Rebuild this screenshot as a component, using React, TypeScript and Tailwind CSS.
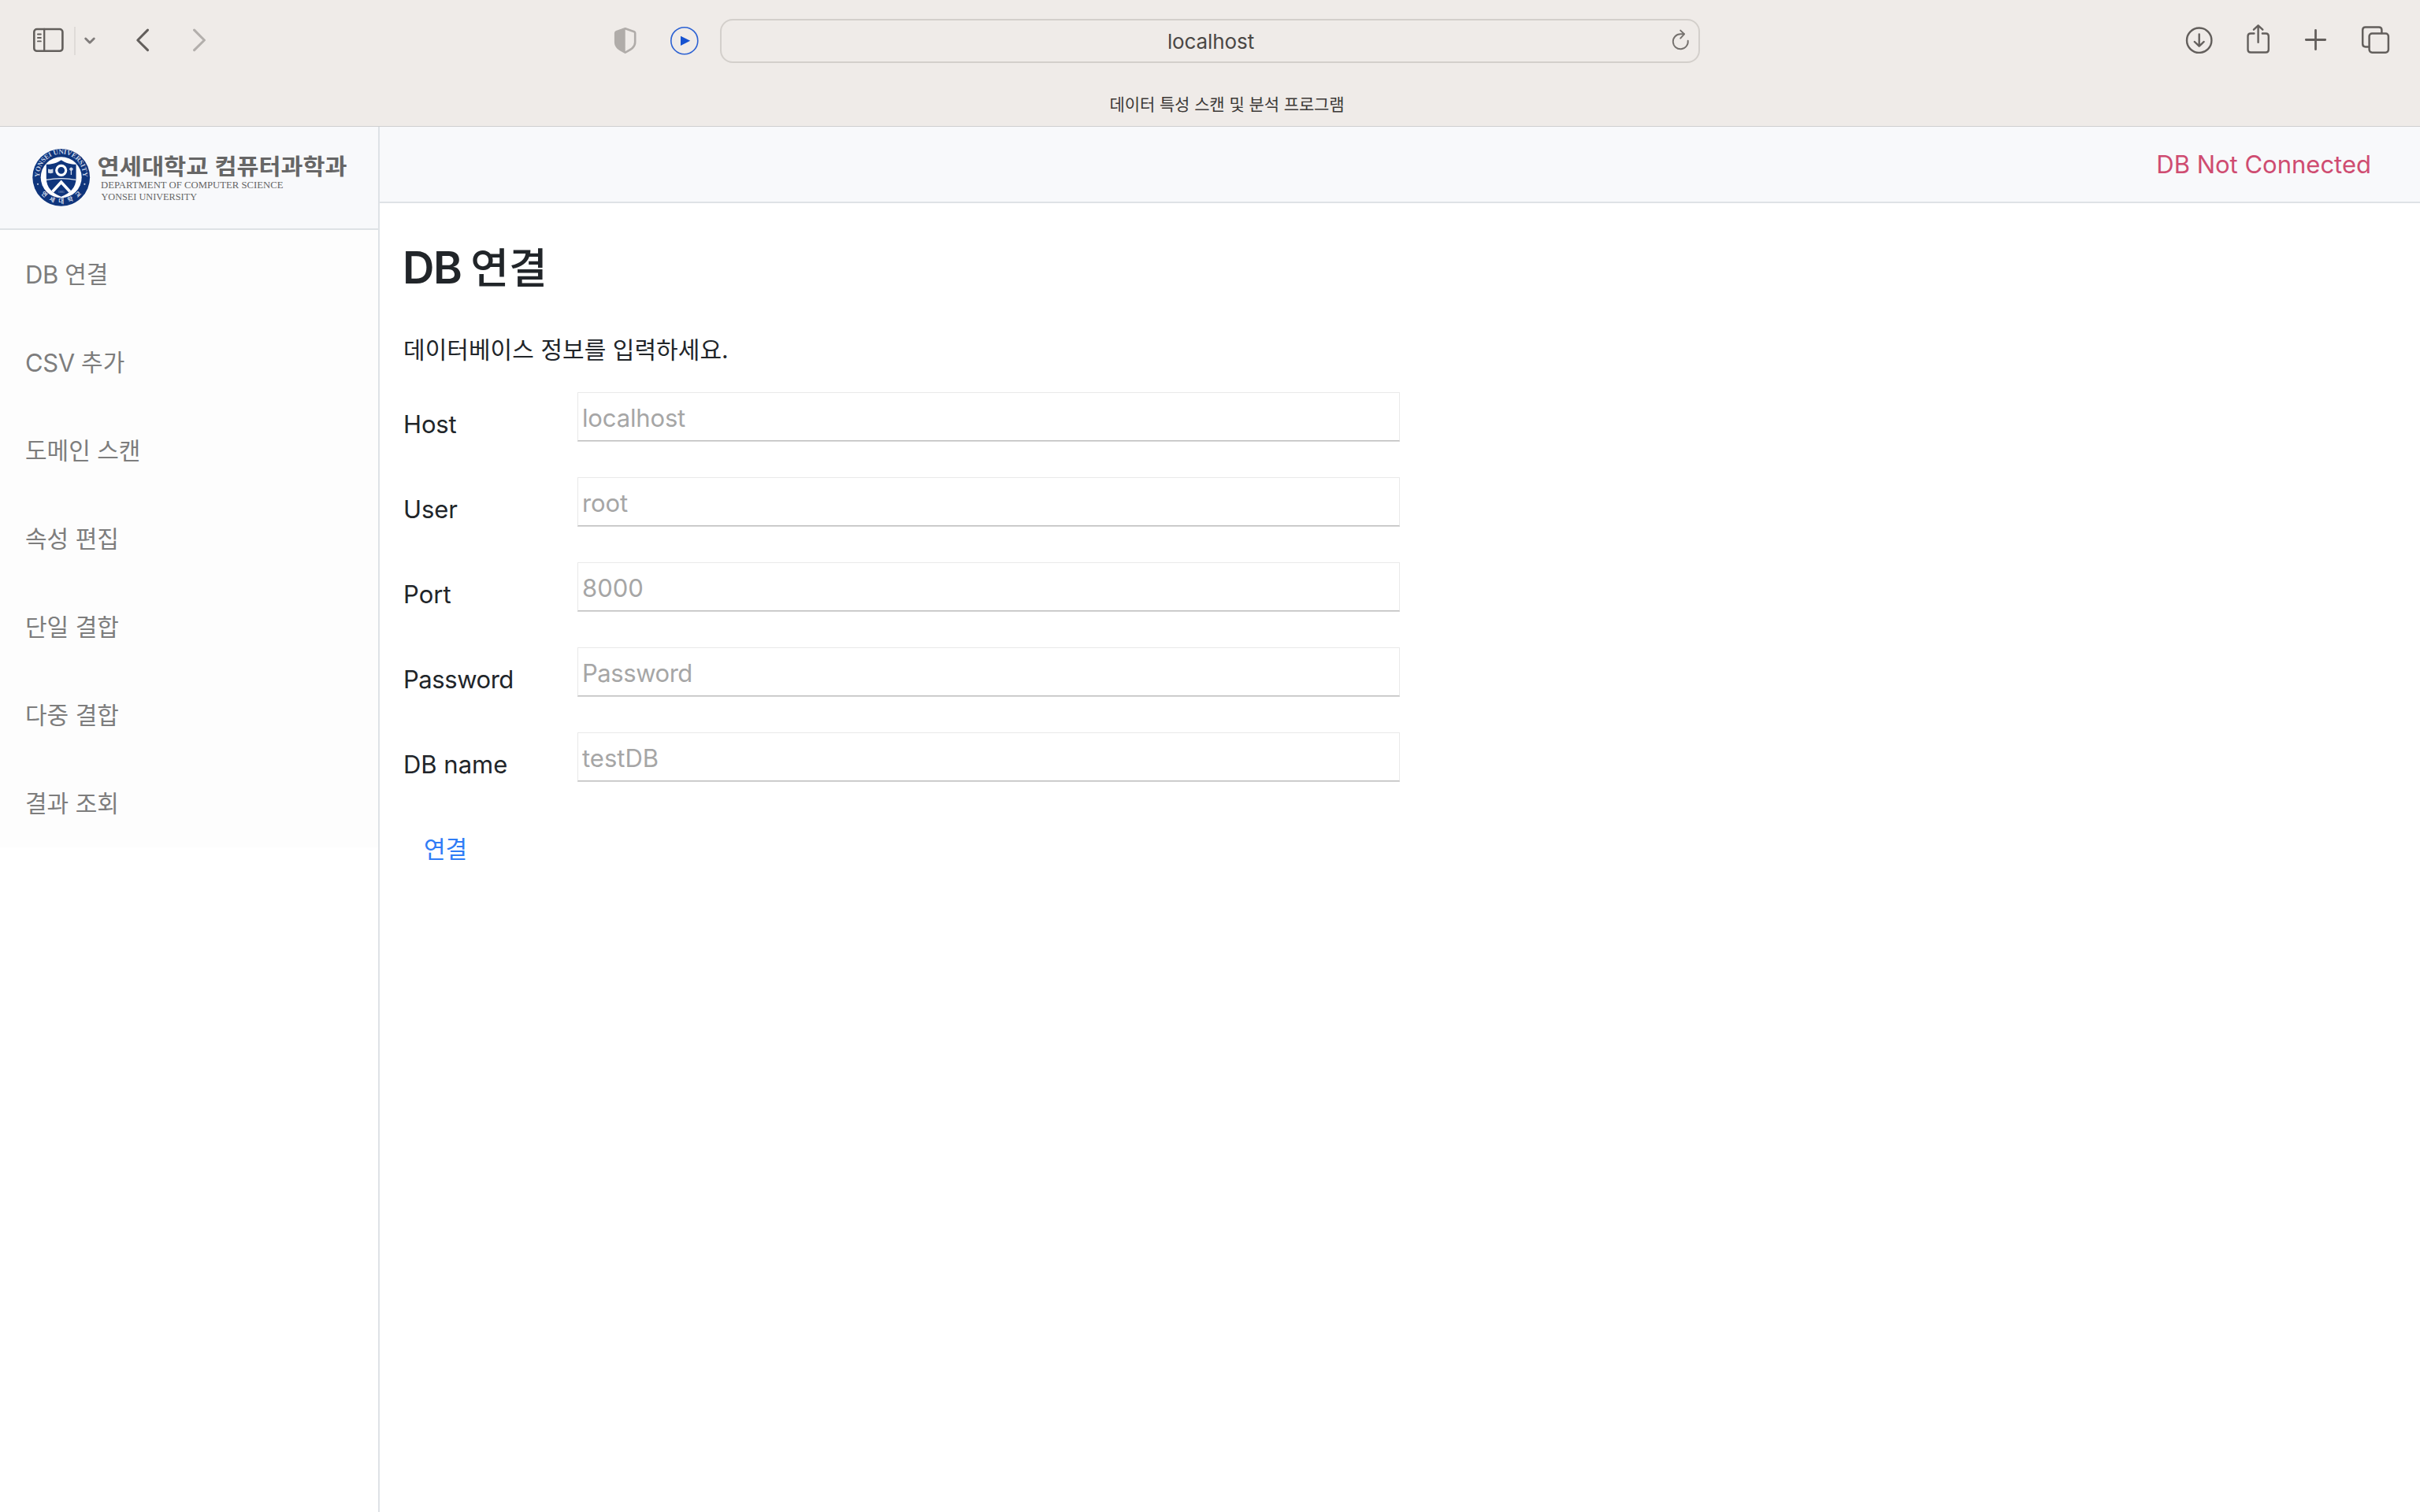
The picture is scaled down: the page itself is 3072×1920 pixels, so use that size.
import type { ReactNode } from "react";

const MENU: { latin?: string; korean: string }[] = [
  { latin: "DB", korean: "연결" },
  { latin: "CSV", korean: "추가" },
  { korean: "도메인 스캔" },
  { korean: "속성 편집" },
  { korean: "단일 결합" },
  { korean: "다중 결합" },
  { korean: "결과 조회" },
];

const FIELDS = [
  { label: "Host", placeholder: "localhost", tracking: "tracking-[-0.15px]" },
  { label: "User", placeholder: "root", tracking: "tracking-[-0.1px]" },
  { label: "Port", placeholder: "8000", tracking: "tracking-[0px]" },
  { label: "Password", placeholder: "Password", tracking: "tracking-[-0.45px]" },
  { label: "DB name", placeholder: "testDB", tracking: "tracking-[0px]" },
];

/** Toolbar glyph; the view box is in toolbar coordinates. */
function Glyph({ x, w, className, children }: { x: number; w: number; className?: string; children: ReactNode }) {
  return (
    <svg
      width={w}
      height={60}
      viewBox={`${x} 22 ${w} 60`}
      fill="none"
      stroke="currentColor"
      strokeLinecap="round"
      strokeLinejoin="round"
      className={`shrink-0 ${className ?? ""}`}
    >
      {children}
    </svg>
  );
}

/** Korean run, optically matched to the surrounding Latin text. */
function Ko({ children }: { children: ReactNode }) {
  return <span className="align-[1px] text-[30px] leading-none">{children}</span>;
}

function Toolbar() {
  return (
    <header className="flex h-[161px] flex-col border-b border-[#cfcfd0] bg-[#efebe8] text-[#635f5c]">
      <div className="flex h-[104px] shrink-0 items-center">
        <Glyph x={40} w={44} className="ml-10">
          <rect x="43.3" y="37" width="36.1" height="27.8" rx="3.6" strokeWidth="2.6" />
          <path d="M56.2 37V64.8" strokeWidth="2.3" />
          <path d="M47.9 43.5H51.9M47.9 48H51.9M47.9 52.4H51.9" strokeWidth="1.8" />
        </Glyph>
        <div className="ml-[10px] h-9 w-0.5 bg-[#dfdbd8]" />
        <Glyph x={104} w={20} className="ml-2 text-[#807c7b]">
          <path d="M108.7 49L114 54.2L119.3 49" strokeWidth="2.9" />
        </Glyph>
        <Glyph x={170} w={22} className="ml-[46px]">
          <path d="M187.5 38.2L174.8 51L187.5 63.6" strokeWidth="3.1" />
        </Glyph>
        <Glyph x={242} w={22} className="ml-[50px] text-[#b3afac]">
          <path d="M246.6 38.2L259.4 51L246.6 63.6" strokeWidth="3.1" />
        </Glyph>
        <Glyph x={778} w={32} className="ml-[514px] text-[#b0aca9]">
          <path
            d="M793.7 36.3L805 40.2Q806.2 40.7 806.2 42V53.5C806.2 60.5 800 63.2 793.7 66.6C787.4 63.2 781.2 60.5 781.2 53.5V42Q781.2 40.7 782.4 40.2Z"
            strokeWidth="2.6"
          />
          <path d="M793.7 36.3L782.4 40.2Q781.2 40.7 781.2 42V53.5C781.2 60.5 787.4 63.2 793.7 66.6Z" fill="currentColor" stroke="none" />
        </Glyph>
        <Glyph x={848} w={42} className="ml-[38px] text-[#1652d0]">
          <circle cx="868.8" cy="51.7" r="17" strokeWidth="1.6" strokeOpacity="0.9" />
          <path d="M864 45.7L876.2 51.8L864 58Z" fill="currentColor" stroke="none" />
        </Glyph>
        <div className="ml-6 flex h-14 w-[1244px] shrink-0 items-center rounded-2xl border-2 border-[#d3cfcb]">
          <span className="ml-[42px] flex-1 pt-px text-center text-[26px] leading-8 tracking-[-0.1px] text-[#4a4745]">localhost</span>
          <Glyph x={2116} w={40} className="text-[#75716e]">
            <path d="M2142.7 51.6A9.5 9.5 0 1 1 2133.2 43.3H2137.8" strokeWidth="1.9" />
            <path d="M2133.2 38.6L2138 43.3L2133.2 48.6" strokeWidth="1.9" />
          </Glyph>
        </div>
        <Glyph x={2772} w={40} className="ml-[614px]">
          <circle cx="2791.7" cy="51.2" r="15.7" strokeWidth="2.4" />
          <path d="M2791.7 43.5V58.6M2785.8 53L2791.7 58.7L2797.6 53" strokeWidth="2.4" />
        </Glyph>
        <Glyph x={2848} w={38} className="ml-9">
          <path
            d="M2861.4 42.5H2857Q2853.5 42.5 2853.5 46V63Q2853.5 66.5 2857 66.5H2876.3Q2879.8 66.5 2879.8 63V46Q2879.8 42.5 2876.3 42.5H2871.9"
            strokeWidth="2.4"
          />
          <path d="M2866.6 53.8V32.5M2860.9 37.7L2866.6 32.3L2872.3 37.7" strokeWidth="2.4" />
        </Glyph>
        <Glyph x={2922} w={36} className="ml-9">
          <path d="M2939.5 38.3V62.7M2927.3 50.5H2951.7" strokeWidth="2.8" />
        </Glyph>
        <Glyph x={2994} w={44} className="ml-9">
          <rect x="3007.6" y="42.5" width="24.3" height="24.2" rx="3.6" strokeWidth="2.5" />
          <path
            d="M3007 59.4H3002.8Q2999.2 59.4 2999.2 55.8V38Q2999.2 34.4 3002.8 34.4H3019.8Q3023.4 34.4 3023.4 38V42"
            strokeWidth="2.5"
          />
        </Glyph>
      </div>
      <div className="pt-[13px] pl-[43px] text-center text-[21px] leading-8 tracking-[-0.1px] text-[#3c3937]">
        데이터 특성 스캔 및 분석 프로그램
      </div>
    </header>
  );
}

function Logo() {
  return (
    <svg width={404} height={80} viewBox="40 185 404 80" className="ml-10">
      <defs>
        <path id="sealTop" d="M52.3 233.5A27.5 27.5 0 1 1 103.1 233.5" />
        <path id="sealBottom" d="M46.2 236A33.5 33.5 0 0 0 109.2 236" />
      </defs>
      <circle cx="77.7" cy="225.3" r="36.4" fill="#0f357c" />
      <circle cx="77.7" cy="225.3" r="26" fill="#fdfdfe" />
      <text fill="#c9d3e6" fontFamily="Liberation Serif, serif" fontWeight="700" fontSize="8.8">
        <textPath href="#sealTop" startOffset="50%" textAnchor="middle" textLength="90">
          YONSEI UNIVERSITY
        </textPath>
      </text>
      <text fill="#d3dbea" fontFamily="Noto Sans CJK KR, sans-serif" fontWeight="700" fontSize="7.5">
        <textPath href="#sealBottom" startOffset="50%" textAnchor="middle" textLength="58">
          연세대학교
        </textPath>
      </text>
      <circle cx="48" cy="233.8" r="1.1" fill="#c3cde0" />
      <circle cx="107.4" cy="233.8" r="1.1" fill="#c3cde0" />
      <path
        d="M77.7 203.2C83 207 90 208.6 96.6 208.8V226C96.6 238.5 88.5 245.5 77.7 249.8C66.9 245.5 58.8 238.5 58.8 226V208.8C65.4 208.6 72.4 207 77.7 203.2Z"
        fill="#0f357c"
      />
      <circle cx="77.7" cy="216.3" r="6" fill="none" stroke="#fff" strokeWidth="3.2" />
      <path d="M61 214.5L64.2 215.2L67.4 214.5V219.6L64.2 220.2L61 219.6Z" fill="#cfd8e8" />
      <path
        d="M90.4 216V222M88.6 214.8Q90.4 211.6 92.2 214.8Q90.4 218.2 88.6 214.8Z"
        stroke="#cfd8e8"
        strokeWidth="1.3"
        fill="#cfd8e8"
      />
      <path d="M59 228.4Q77.7 225 96.4 228.4" stroke="#e8edf5" strokeWidth="1.2" fill="none" />
      <path d="M77.7 228.6L90.2 242.2L87.4 244.5L77.7 234L68 244.5L65.2 242.2Z" fill="#fff" />
      <text x="77.7" y="245.4" textAnchor="middle" fill="#8fa3c9" fontFamily="Liberation Serif, serif" fontSize="4">
        1885
      </text>
      <g fill="#666" fontFamily="Noto Sans CJK KR, sans-serif" fontWeight="700" fontSize="28">
        <text x="123.5" y="221.5" textLength="141" lengthAdjust="spacingAndGlyphs">
          연세대학교
        </text>
        <text x="272.5" y="221.5" textLength="168" lengthAdjust="spacingAndGlyphs">
          컴퓨터과학과
        </text>
      </g>
      <g fill="#666" fontFamily="Liberation Serif, serif" fontSize="13.2">
        <text x="128" y="239" textLength="231.5" lengthAdjust="spacingAndGlyphs">
          DEPARTMENT OF COMPUTER SCIENCE
        </text>
        <text x="128.5" y="253.6" textLength="121.5" lengthAdjust="spacingAndGlyphs">
          YONSEI UNIVERSITY
        </text>
      </g>
    </svg>
  );
}

function Sidebar() {
  return (
    <aside className="w-[482px] shrink-0 border-r-2 border-[#dee2e6]">
      <div className="flex h-[131px] items-start border-b-2 border-[#dee2e6] bg-[#f8f9fb] pt-6">
        <Logo />
      </div>
      <nav className="bg-[#fdfdfd]">
        {MENU.map(({ latin, korean }) => (
          <a key={korean} className="flex h-28 items-center pt-px pl-8 text-[#7d7d7d]">
            <p className="leading-[48px]">
              {latin && <span className="tracking-[-0.4px]">{`${latin} `}</span>}
              <Ko>{korean}</Ko>
            </p>
          </a>
        ))}
      </nav>
    </aside>
  );
}

function ConnectForm() {
  return (
    <form className="pl-[30px] text-[#212529]">
      <h1 className="-ml-px pt-[46px] text-[56px] leading-[72px] font-semibold tracking-[-1.4px] [word-spacing:-1px]">
        DB <span className="text-[53px] leading-none font-medium tracking-normal">연결</span>
      </h1>
      <p className="pt-[45px] leading-[48px] tracking-[0.05px]">
        <Ko>데이터베이스 정보를 입력하세요.</Ko>
      </p>
      <div className="pt-[29px]">
        {FIELDS.map(({ label, placeholder, tracking }) => (
          <div key={label} className="flex h-[108px] items-start">
            <label className={`w-[221px] pt-[17px] leading-[48px] ${tracking}`}>{label}</label>
            <input
              placeholder={placeholder}
              className={`h-[62px] w-[1044px] border border-[#e9e9e9] border-b-[#bebebe] pt-0.5 pl-[5px] leading-[48px] shadow-[0_1px_0_#dadada] placeholder:text-[#a6a6a6] ${tracking}`}
            />
          </div>
        ))}
      </div>
      <button type="button" className="block pt-[17px] pl-[26px] leading-[48px] text-[#2f7cf6]">
        <Ko>연결</Ko>
      </button>
    </form>
  );
}

export default function App() {
  return (
    <div className="flex h-[1920px] w-[3072px] flex-col overflow-hidden bg-white font-['Inter','Noto_Sans_CJK_KR',sans-serif] text-[31px]">
      <Toolbar />
      <div className="flex flex-1">
        <Sidebar />
        <main className="flex-1">
          <div className="flex h-[97px] items-center justify-end border-b-2 border-[#dee2e6] bg-[#f8f9fb] pr-[62px] leading-[48px] text-[#cf4c71]">
            DB Not Connected
          </div>
          <ConnectForm />
        </main>
      </div>
    </div>
  );
}
